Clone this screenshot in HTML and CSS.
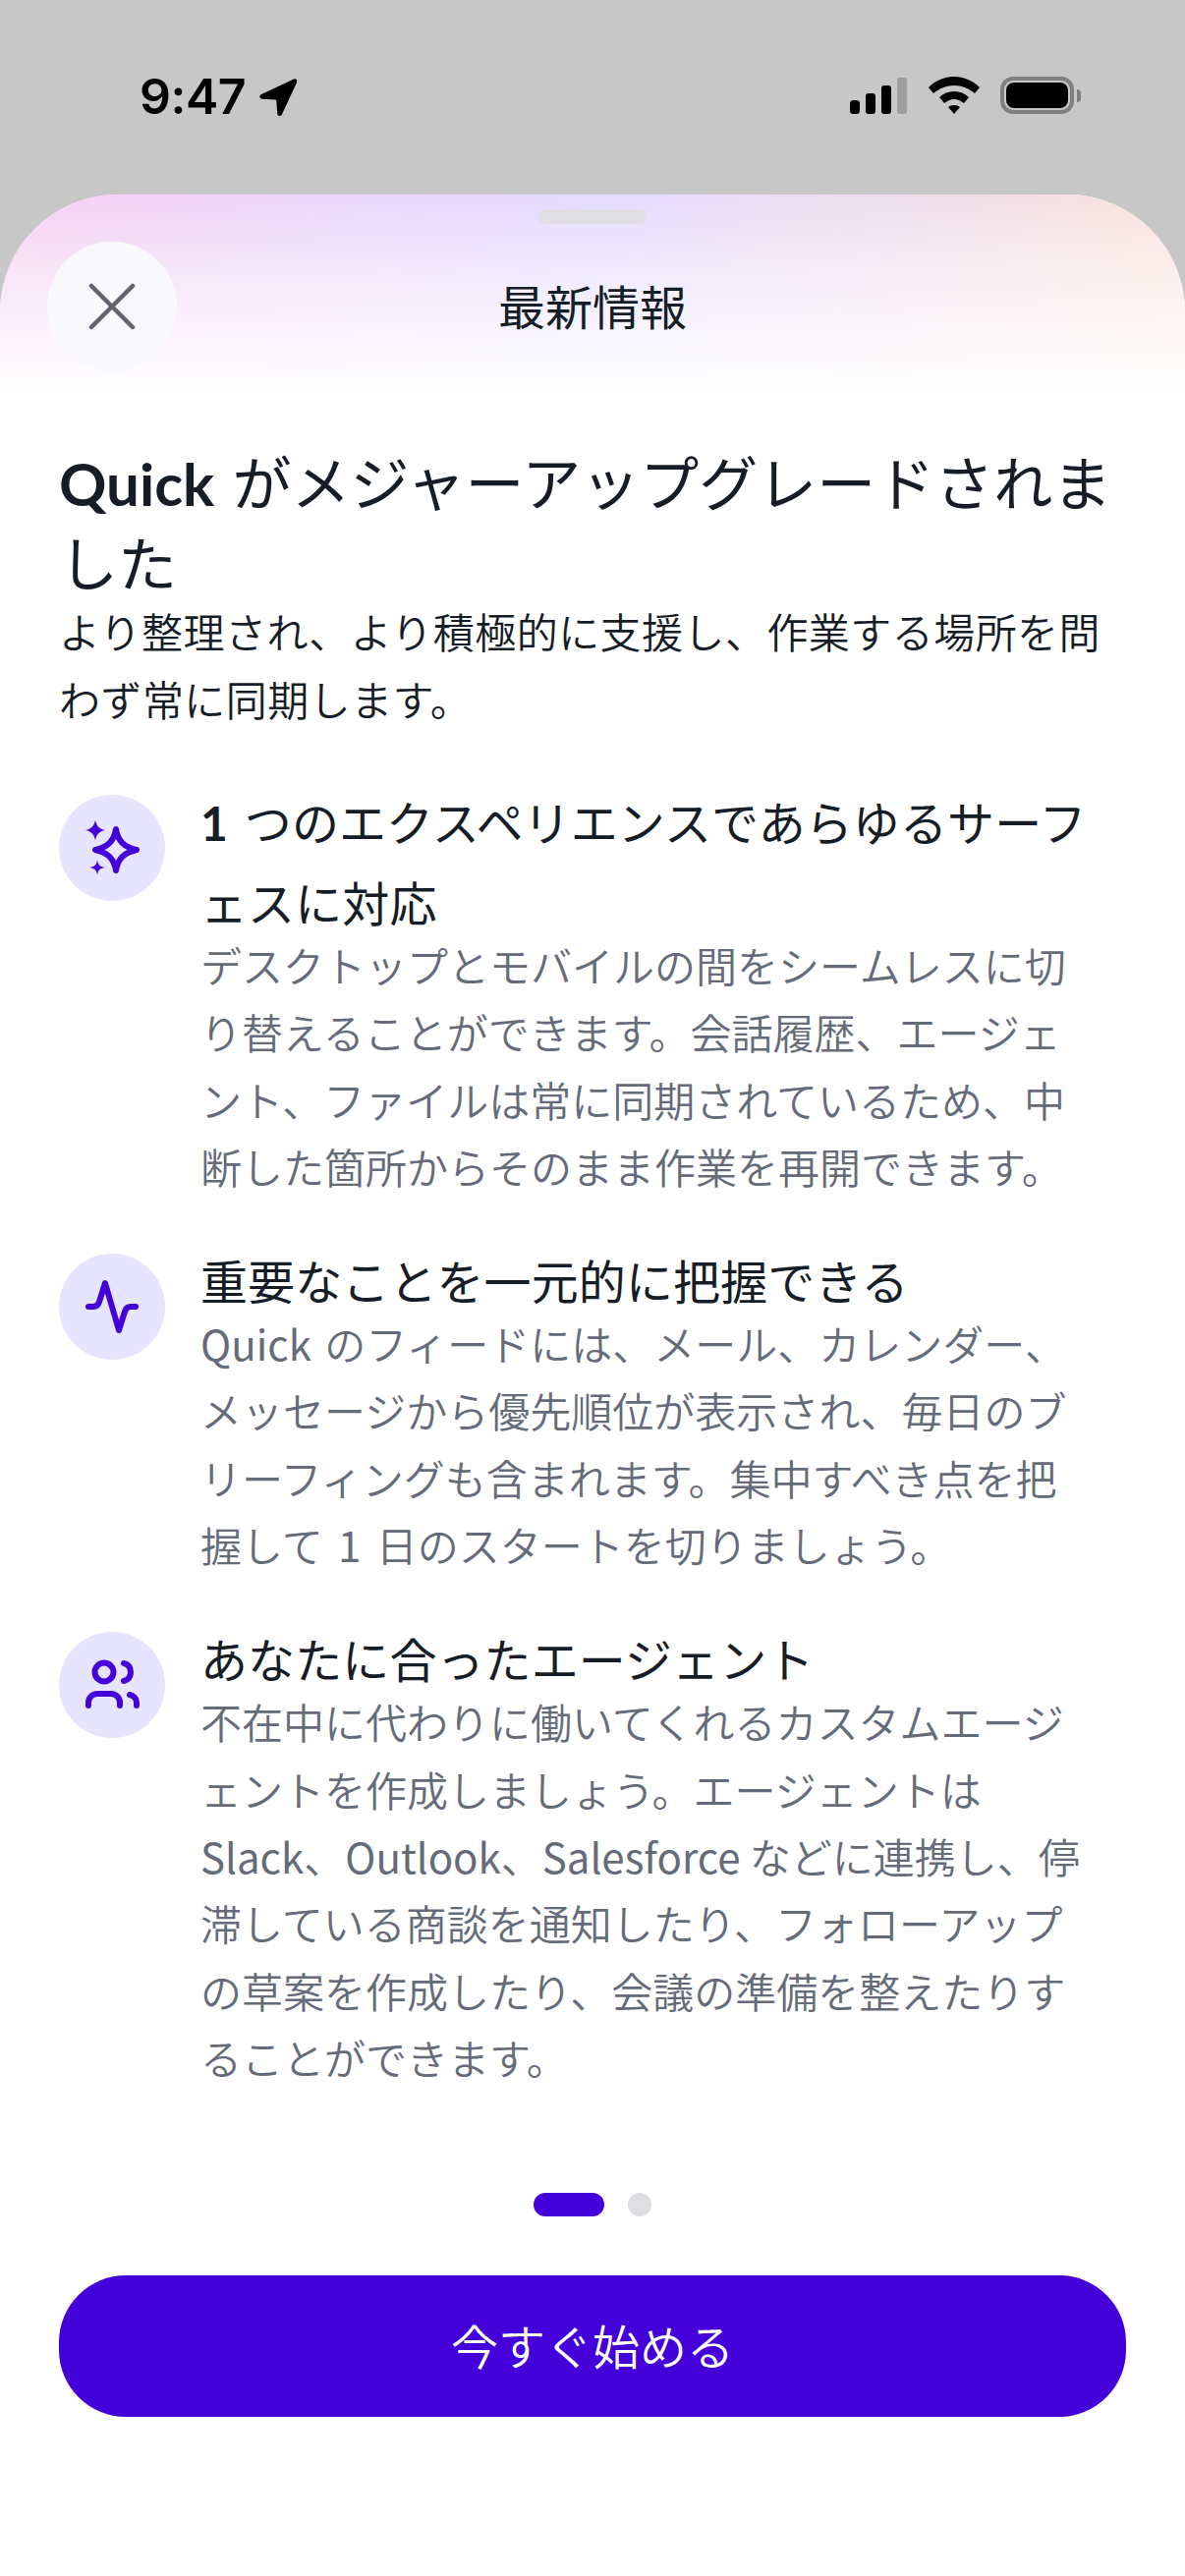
FILE: index.html
```html
<!DOCTYPE html>
<html lang="ja">
<head>
<meta charset="utf-8">
<title>最新情報</title>
<link rel="stylesheet" href="styles.css">
</head>
<body>
<div class="status">
  <div class="status-left">
    <span class="time">9:47</span>
    <svg class="arrow" width="40" height="40" viewBox="0 0 40 40"><path d="M36 1.500 3 17c-2.500 1.200-2 4.500 1 4.800l13 .6c.8 0 1.200.5 1.300 1.200l.9 13c.2 3 3.600 3.300 4.700.8L39 5c1-2.600-.8-4.400-3-3.500Z" fill="#000"/></svg>
  </div>
  <div class="status-right">
    <svg width="58" height="37" viewBox="0 0 58 37"><rect x="0" y="23" width="10" height="14" rx="3.500" fill="#000"/><rect x="16" y="16" width="10" height="21" rx="3" fill="#000"/><rect x="32" y="8" width="10" height="29" rx="3" fill="#000"/><rect x="48" y="0" width="10" height="37" rx="3" fill="#9e9e9e"/></svg>
    <svg class="wifi" width="52" height="38" viewBox="0 0 52 38"><path d="M26 0c10 0 19 4 26 11l-5 6C41 12 34 9 26 9S11 12 5 17L0 11C7 4 16 0 26 0Z" fill="#000"/><path d="M26 15c6 0 11 2 15 6l-5 6c-3-2-6-4-10-4s-7 2-10 4l-5-6c4-4 9-6 15-6Z" fill="#000"/><path d="M26 29c2.500 0 4.500.7 6 2l-6 7-6-7c1.500-1.300 3.500-2 6-2Z" fill="#000"/></svg>
    <div class="battery"><div class="battery-fill"></div></div>
    <div class="battery-nub"></div>
  </div>
</div>

<main class="sheet">
  <header class="sheet-head">
    <div class="handle"></div>
    <div class="nav">
      <button class="close" aria-label="閉じる">
        <svg width="48" height="48" viewBox="0 0 48 48"><path d="M3 3 45 45M45 3 3 45" stroke="#63636f" stroke-width="4.500" stroke-linecap="round" fill="none"/></svg>
      </button>
      <div class="nav-title">最新情報</div>
    </div>
  </header>

  <section class="content">
    <h1 class="headline"><span class="latin">Quick</span> がメジャーアップグレードされま<br>した</h1>
    <p class="lead">より整理され、より積極的に支援し、作業する場所を問<br>わず常に同期します。</p>

    <div class="features">
      <article class="feature">
        <div class="badge">
          <svg width="108" height="108" viewBox="0 0 108 108"><path d="M58 35c2 12 8 18 21 21-13 3-19 9-21 21-2-12-8-18-21-21 13-3 19-9 21-21Z" fill="none" stroke="#4400d9" stroke-width="6" stroke-linejoin="round"/><path d="M37 26c1.500 6 4 8.500 10 10-6 1.500-8.500 4-10 10-1.500-6-4-8.500-10-10 6-1.500 8.500-4 10-10Z" fill="#4400d9"/><path d="M39 66.500c1 5 2.500 6.500 7.500 7.500-5 1-6.500 2.500-7.500 7.500-1-5-2.500-6.500-7.500-7.500 5-1 6.500-2.500 7.500-7.500Z" fill="#4400d9"/></svg>
        </div>
        <div class="feature-text">
          <h2 class="feature-title"><span class="num">1</span> つのエクスペリエンスであらゆるサーフ<br>ェスに対応</h2>
          <p class="feature-body">デスクトップとモバイルの間をシームレスに切<br>り替えることができます。会話履歴、エージェ<br>ント、ファイルは常に同期されているため、中<br>断した箇所からそのまま作業を再開できます。</p>
        </div>
      </article>

      <article class="feature">
        <div class="badge">
          <svg width="108" height="108" viewBox="0 0 108 108"><path d="M30 54h5c3 0 5-1.500 6-5l6-19 14 48 6-19c1-3.500 3-5 6-5h5" fill="none" stroke="#4400d9" stroke-width="6" stroke-linecap="round" stroke-linejoin="round"/></svg>
        </div>
        <div class="feature-text">
          <h2 class="feature-title">重要なことを一元的に把握できる</h2>
          <p class="feature-body"><span class="en en-word">Quick</span> のフィードには、メール、カレンダー、<br>メッセージから優先順位が表示され、毎日のブ<br>リーフィングも含まれます。集中すべき点を把<br>握して <span class="en en-num">1</span> 日のスタートを切りましょう。</p>
        </div>
      </article>

      <article class="feature">
        <div class="badge">
          <svg width="108" height="108" viewBox="0 0 108 108" fill="none" stroke="#4400d9" stroke-width="6" stroke-linecap="round" stroke-linejoin="round"><circle cx="46" cy="41" r="9.500"/><path d="M30 75v-3a9 9 0 0 1 9-9h14a9 9 0 0 1 9 9v3"/><path d="M66 32c4.500 1 7 4.500 7 9s-2.500 8-7 9"/><path d="M72 64c4 1 7 4 7 8v3"/></svg>
        </div>
        <div class="feature-text">
          <h2 class="feature-title">あなたに合ったエージェント</h2>
          <p class="feature-body">不在中に代わりに働いてくれるカスタムエージ<br>ェントを作成しましょう。エージェントは<br><span class="en">Slack</span>、<span class="en">Outlook</span>、<span class="en">Salesforce</span> などに連携し、停<br>滞している商談を通知したり、フォローアップ<br>の草案を作成したり、会議の準備を整えたりす<br>ることができます。</p>
        </div>
      </article>
    </div>
  </section>

  <div class="dots"><span class="dot dot-active"></span><span class="dot"></span></div>
  <button class="cta">今すぐ始める</button>
</main>
</body>
</html>
```
FILE: styles.css
```css
* { box-sizing: border-box; }
html, body { margin: 0; padding: 0; }
body {
  width: 1206px;
  height: 2622px;
  background: #c7c7c7;
  font-family: "Noto Sans CJK JP", "Noto Sans", sans-serif;
  overflow: hidden;
}
.status {
  height: 198px;
  padding: 79px 106px 0 142px;
  display: flex;
  justify-content: space-between;
  align-items: flex-start;
}
.status-left { display: flex; align-items: flex-start; gap: 13px; }
.time {
  font-family: Inter, sans-serif;
  font-weight: 600;
  font-size: 50px;
  line-height: 38px;
  color: #000;
  letter-spacing: -.5px;
}
.status-right { display: flex; align-items: flex-start; }
.wifi { margin-left: 22px; margin-top: -1px; }
.battery {
  margin-left: 21px;
  margin-top: -1px;
  width: 75px;
  height: 38px;
  border: 4px solid #7f7f7f;
  border-radius: 13px;
  padding: 2px;
}
.battery-fill { width: 100%; height: 100%; background: #000; border-radius: 8px; }
.battery-nub {
  width: 4px;
  height: 13px;
  margin: 12px 0 0 3px;
  background: #7f7f7f;
  border-radius: 0 4px 4px 0;
}
.sheet {
  height: 2424px;
  background: #fff;
  border-radius: 120px 120px 0 0;
  overflow: hidden;
}
.sheet-head {
  height: 202px;
  padding-top: 15px;
  background:
    linear-gradient(to bottom, rgba(255,255,255,0) 0%, rgba(255,255,255,.55) 50%, #fff 100%),
    linear-gradient(90deg, #f6d0f2 0%, #e4dbff 50%, #fbe2dc 100%);
}
.handle {
  width: 110px;
  height: 15px;
  margin: 0 auto;
  border-radius: 8px;
  background: #dedee3;
}
.nav {
  display: flex;
  align-items: center;
  margin: 18px 48px 0;
}
.close {
  width: 132px;
  height: 132px;
  border: 0;
  padding: 0;
  border-radius: 50%;
  background: #f9f9fb;
  display: flex;
  align-items: center;
  justify-content: center;
}
.nav-title {
  flex: 1;
  margin: 0 132px 5px 0;
  text-align: center;
  font-size: 48px;
  line-height: 68px;
  font-weight: 400;
  color: #161d26;
}
.content { padding: 48px 60px 0; }
.latin {
  font-family: Lato, sans-serif;
  font-weight: 700;
  line-height: 0;
  margin-right: 5px;
}
.num {
  font-family: Lato, sans-serif;
  font-weight: 700;
  line-height: 0;
  margin-right: 6px;
}
.en { font-weight: 400; }
.en-word { margin-right: 4px; }
.en-num { margin: 0 6px; }
.headline {
  margin: 0;
  font-size: 60px;
  line-height: 82px;
  font-weight: 400;
  color: #161d26;
  white-space: nowrap;
}
.lead {
  margin: -5px 0 0;
  font-size: 42px;
  line-height: 69px;
  font-weight: 350;
  letter-spacing: .45px;
  color: #161d26;
  white-space: nowrap;
}
.features { margin-top: 49px; display: flex; flex-direction: column; gap: 40px; }
.feature { display: flex; gap: 36px; align-items: flex-start; }
.badge {
  flex: none;
  width: 108px;
  height: 108px;
  margin-top: 15px;
  border-radius: 50%;
  background: #e7e4ff;
}
.badge svg { display: block; }
.feature-title {
  margin: 0;
  font-size: 48px;
  line-height: 82px;
  font-weight: 400;
  letter-spacing: .1px;
  color: #161d26;
  white-space: nowrap;
}
.feature-body {
  margin: -10px 0 0;
  font-size: 42px;
  line-height: 68.3px;
  font-weight: 350;
  color: #656b78;
  white-space: nowrap;
}
.dots {
  display: flex;
  justify-content: center;
  gap: 24px;
  margin-top: 104px;
}
.dot { width: 24px; height: 24px; border-radius: 12px; background: #dedee3; }
.dot-active { width: 72px; background: #4400d9; }
.cta {
  display: block;
  width: 1086px;
  height: 144px;
  margin: 60px auto 0;
  padding: 0 0 4px;
  border: 0;
  border-radius: 68px;
  background: #4400d9;
  color: #fff;
  font-family: inherit;
  font-size: 48px;
  font-weight: 350;
}
```
